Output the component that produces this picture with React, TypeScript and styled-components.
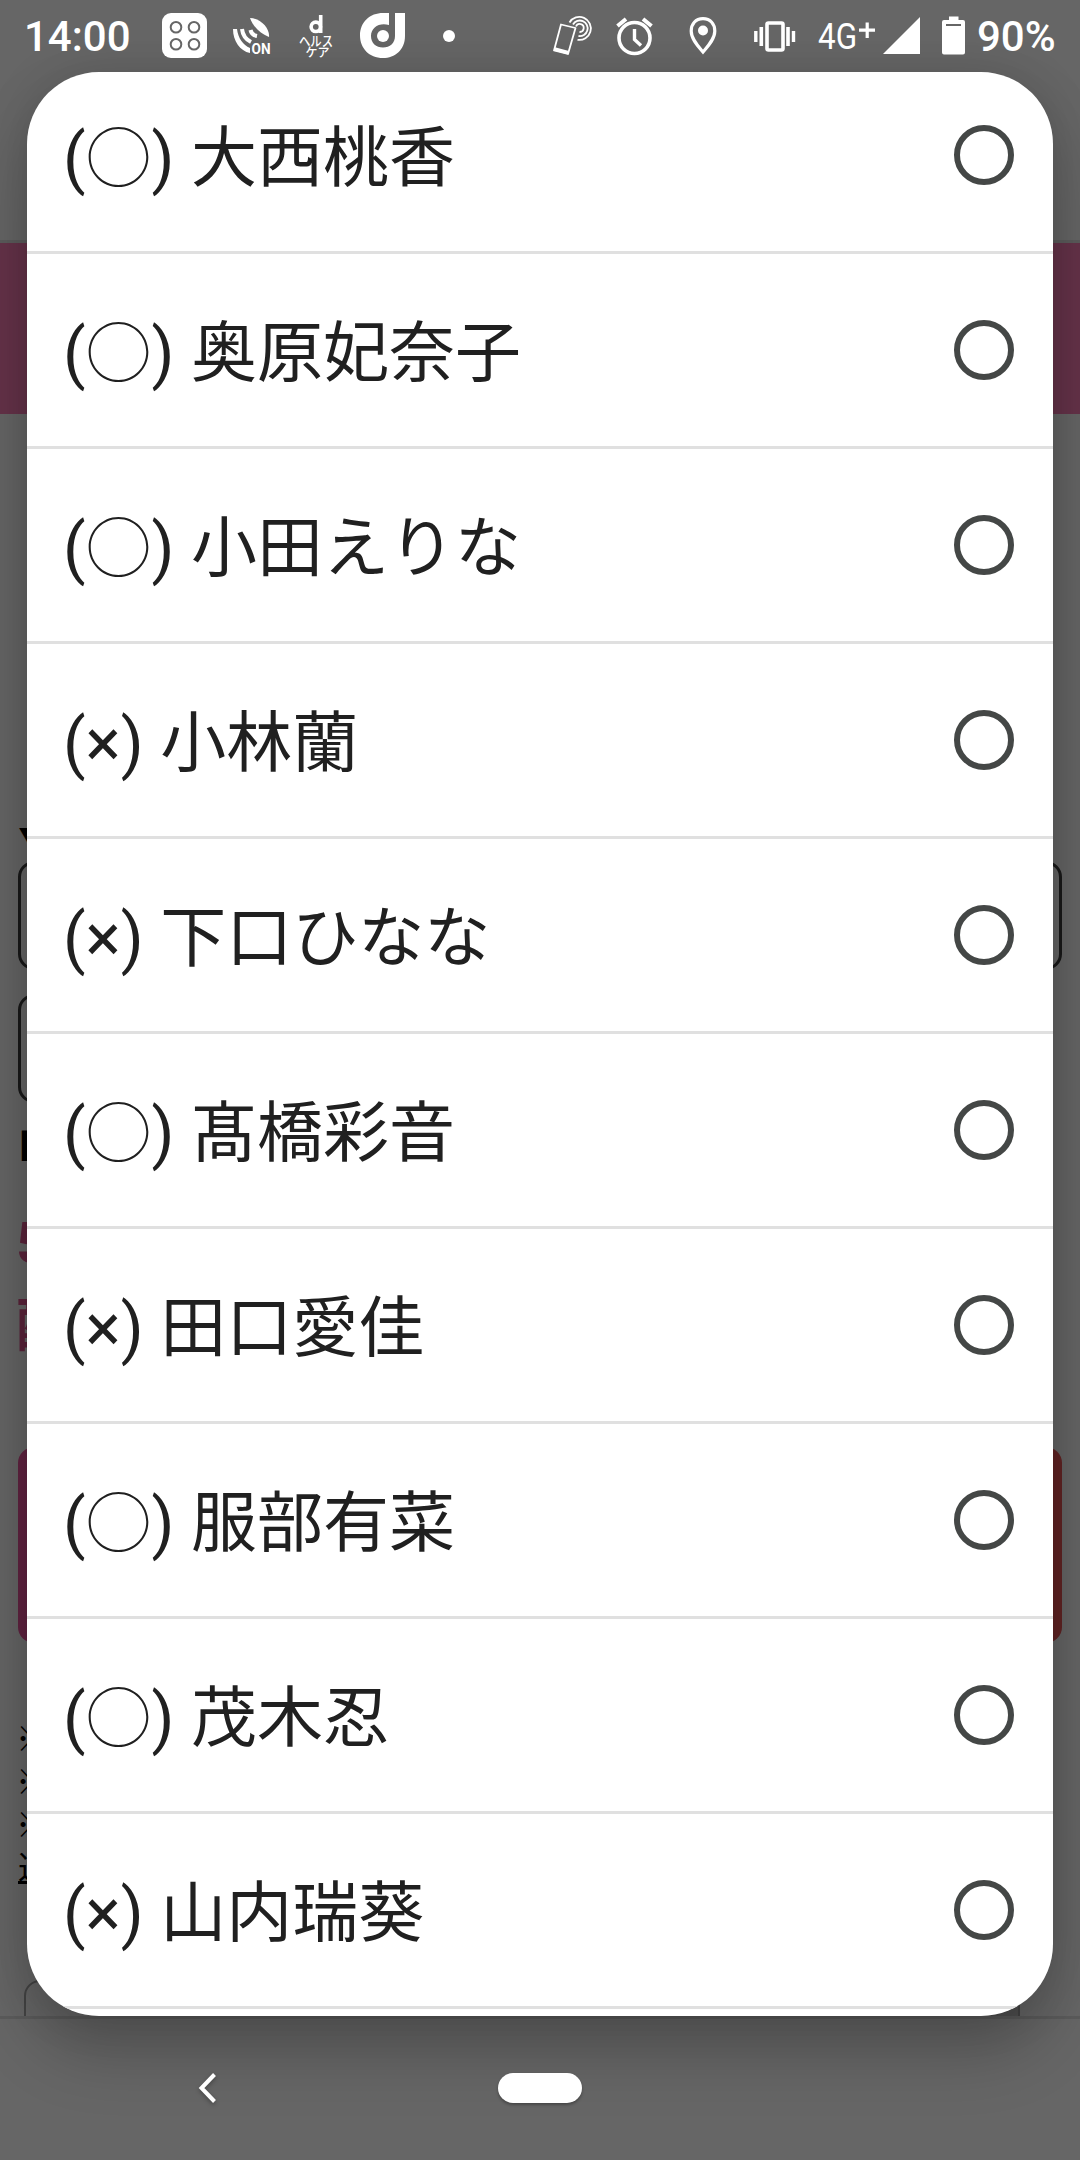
import React from "react";
import styled, { createGlobalStyle } from "styled-components";

const GlobalStyle = createGlobalStyle`
  body { margin: 0; background: #666666; }
  * { box-sizing: border-box; }
`;

const sans = `Roboto, "Noto Sans CJK JP", sans-serif`;

const Screen = styled.div`
  position: relative;
  width: 1080px;
  height: 2160px;
  overflow: hidden;
  display: flex;
  flex-direction: column;
  background: #666666;
  font-family: ${sans};
`;

const Page = styled.main`
  height: 2016px;
  flex: none;
  overflow: hidden;
  display: flex;
  flex-direction: column;
  padding-top: 240px;
  color: #000;
`;

const Band = styled.div`
  height: 174px;
  flex: none;
  background: #66334a;
  border-top: 3px solid #5c5c5c;
`;

const Content = styled.section`
  display: flex;
  flex-direction: column;
  padding: 400px 18px 0;
`;

const Caption = styled.div<{ $h: number; $line: number }>`
  height: ${(p) => p.$h}px;
  line-height: ${(p) => p.$line}px;
  font-size: 38px;
`;

const Field = styled.div<{ $w: number }>`
  width: ${(p) => p.$w}px;
  height: 109px;
  margin-bottom: 24px;
  border: 3px solid #1a1a1a;
  border-radius: 16px;
`;

const Prices = styled.div`
  margin-left: -2px;
  padding-top: 35px;
  font-size: 58px;
  font-weight: 700;
  line-height: 83px;
  color: #5c243b;
`;

const Submit = styled.div`
  height: 196px;
  margin-top: 79px;
  border-radius: 16px;
  background: linear-gradient(90deg, #612341, #612323);
`;

const Notes = styled.div`
  margin-top: 75px;
  margin-left: -2px;
  font-size: 33px;
  font-weight: 700;
  line-height: 43px;
`;

const Underlined = styled.div`
  margin-left: 2px;
  font-size: 32px;
  font-weight: 400;
  text-decoration: underline;
  text-decoration-thickness: 3px;
`;

const Select = styled.div`
  display: flex;
  justify-content: flex-end;
  width: 996px;
  height: 80px;
  margin: 90px 0 0 6px;
  border: 2px solid #444;
  border-radius: 16px 0 0 0;
`;

const SelectArrow = styled.div`
  width: 80px;
  background: #515151;
`;

const NavBar = styled.nav`
  flex: 1;
  display: flex;
  align-items: flex-start;
  border-top: 3px solid #5b5b5b;
`;

const Dialog = styled.div`
  position: absolute;
  left: 27px;
  top: 72px;
  width: 1026px;
  height: 1944px;
  overflow: hidden;
  border-radius: 72px;
  background: #fff;
`;

const DialogShadow = styled.div`
  position: absolute;
  left: 27px;
  top: 72px;
  width: 1026px;
  height: 1944px;
  border-radius: 72px;
  box-shadow: 0 36px 64px rgba(0, 0, 0, 0.22), 0 0 48px rgba(0, 0, 0, 0.12);
`;

const Options = styled.ul`
  list-style: none;
  margin: -13px 0 0;
  padding: 0;
`;

const Option = styled.li`
  display: flex;
  align-items: center;
  justify-content: space-between;
  height: 195px;
  padding: 0 39px 0 36px;
  border-bottom: 3px solid #e0e0e0;
  color: #202020;
`;

const Name = styled.span`
  padding-top: 7px;
  font-size: 66px;
  line-height: 78px;
  white-space: pre;
`;

const Ring = styled.span`
  display: inline-block;
  width: 66px;
  line-height: 1;
  text-align: center;
  font-size: 64px;
`;

const Radio = styled.span`
  width: 60px;
  height: 60px;
  border: 6px solid #444746;
  border-radius: 50%;
`;

const StatusBar = styled.header`
  position: absolute;
  inset: 0 0 auto 0;
  height: 72px;
  display: flex;
  align-items: center;
  color: #fff;
`;

const Clock = styled.span`
  margin-left: 24px;
  width: 138px;
  font-size: 42px;
  font-weight: 500;
  line-height: 72px;
  padding-top: 2px;
`;

const StatusIcons = styled.svg`
  display: block;
  flex: none;
`;

const Percent = styled.span`
  margin-left: 12px;
  font-size: 42px;
  font-weight: 500;
  line-height: 72px;
  padding-top: 2px;
`;

const NavKeys = styled.div`
  position: absolute;
  inset: 2019px 0 0 0;
  display: flex;
  align-items: flex-start;
  padding: 54px 0 0 198px;
`;

const Back = styled.svg`
  display: block;
  filter: drop-shadow(0 2px 2px rgba(0, 0, 0, 0.3));
`;

const Home = styled.div`
  width: 84px;
  height: 30px;
  margin-left: 280px;
  border-radius: 15px;
  background: #fff;
  box-shadow: 0 2px 3px rgba(0, 0, 0, 0.3);
`;

const options = [
  { open: true, name: "大西桃香" },
  { open: true, name: "奥原妃奈子" },
  { open: true, name: "小田えりな" },
  { open: false, name: "小林蘭" },
  { open: false, name: "下口ひなな" },
  { open: true, name: "髙橋彩音" },
  { open: false, name: "田口愛佳" },
  { open: true, name: "服部有菜" },
  { open: true, name: "茂木忍" },
  { open: false, name: "山内瑞葵" },
];

function AppIcons() {
  return (
    <StatusIcons width="376" height="72" viewBox="162 0 376 72" fill="#fff">
      <rect x="162" y="13" width="45" height="45" rx="9" />
      <g fill="none" stroke="#666" strokeWidth="2">
        <circle cx="176" cy="27.300" r="5.300" />
        <circle cx="194" cy="27.300" r="5.300" />
        <circle cx="176" cy="44.300" r="5.300" />
        <circle cx="194" cy="44.300" r="5.300" />
      </g>
      <path d="M250 18C260 18 270 28 269 37C261 34 253 27 250 18Z" />
      <path d="M233 29C233 41 240 51 250 53V48C243 45 238 38 237 29Z" />
      <g fill="none" stroke="#fff">
        <path d="M242 29Q243 38 251 42" strokeWidth="4" />
        <path d="M250.500 30Q251.500 35 257 36" strokeWidth="4" />
      </g>
      <text x="251.500" y="53.500" fontFamily="Roboto" fontSize="15.500" fontWeight="700" textLength="19" lengthAdjust="spacingAndGlyphs">ON</text>
      <g fill="none" stroke="#fff" strokeWidth="3.600">
        <circle cx="315.800" cy="26.800" r="4.700" />
        <path d="M320.700 15V33" />
      </g>
      <text x="299" y="46" fontFamily="Noto Sans CJK JP" fontSize="13.500" fontWeight="500" textLength="34" lengthAdjust="spacingAndGlyphs">ヘルス</text>
      <text x="305.500" y="56.500" fontFamily="Noto Sans CJK JP" fontSize="12.500" fontWeight="500" textLength="24" lengthAdjust="spacingAndGlyphs">ケア</text>
      <path fillRule="evenodd" d="M389 13V25C380 22 371 27 371 36C371 43 376 47.500 383 47.500C390 47.500 395 43 395 36V13H405V36C405 50 395 58 383 58C369 58 360 48 360 35.500C360 22 370 13 383 13Z" />
      <circle cx="383" cy="36" r="6" />
      <circle cx="449" cy="36" r="6" />
    </StatusIcons>
  );
}

function SystemIcons() {
  return (
    <StatusIcons width="279" height="72" viewBox="538 0 279 72" fill="none" stroke="#fff">
      <g strokeWidth="1.800">
        <path d="M561 24.500L575.500 28L568 54L554 50.500Z" strokeLinejoin="round" />
        <path d="M554.500 49L568.500 52.800" strokeWidth="3.600" />
        <path d="M569.500 22.500A11.500 11.500 0 1 1 577.500 39.800" />
        <path d="M573 24.500A7.800 7.800 0 1 1 578.500 36" />
        <path d="M576 26.500A4 4 0 1 1 579.500 32" />
      </g>
      <circle cx="634.500" cy="38" r="15.500" strokeWidth="3.600" />
      <path d="M634.500 29V39.500L641 45.500" strokeWidth="3.400" />
      <path d="M617.500 26L626 19M643 19L651.500 26" strokeWidth="4" />
      <path d="M703 18.700C695.500 18.700 691.200 24 691.200 31C691.200 39 698 46 703 52C708 46 714.800 39 714.800 31C714.800 24 710.500 18.700 703 18.700Z" strokeWidth="3.200" />
      <circle cx="703" cy="30.500" r="5" fill="#fff" stroke="none" />
      <rect x="767" y="23" width="16" height="27" rx="1.500" strokeWidth="3.600" />
      <path d="M761.300 27V46M788 27V46" strokeWidth="3.600" />
      <path d="M755.800 31V42M793.500 31V42" strokeWidth="3.400" />
    </StatusIcons>
  );
}

function NetworkIcon() {
  return (
    <StatusIcons width="64" height="72" viewBox="817 0 64 72" fill="#fff">
      <text x="818" y="49" fontFamily="Roboto" fontSize="37.500" textLength="39" lengthAdjust="spacingAndGlyphs">4G</text>
      <path d="M867.200 22.500V38M859 30.200H875" stroke="#fff" strokeWidth="3.200" />
    </StatusIcons>
  );
}

function PowerIcons() {
  return (
    <StatusIcons width="84" height="72" viewBox="881 0 84 72" fill="#fff">
      <path d="M883 54L920 17V54Z" />
      <path fillRule="evenodd" d="M949 16.500H958.500V20H963Q965 20 965 22V52.500Q965 54.500 963 54.500H944Q942 54.500 942 52.500V22Q942 20 944 20H949ZM946 24V26H961V24Z" />
    </StatusIcons>
  );
}

export default function App() {
  return (
    <Screen>
      <GlobalStyle />
      <Page>
        <Band />
        <Content>
          <Caption $h={47} $line={58}>▼</Caption>
          <Field $w={1044} />
          <Field $w={900} />
          <Caption $h={40} $line={40}>■</Caption>
          <Prices>
            <div>5</div>
            <div>配</div>
          </Prices>
          <Submit />
          <Notes>
            <div>※</div>
            <div>※</div>
            <div>※</div>
            <Underlined>返</Underlined>
          </Notes>
          <Select>
            <SelectArrow />
          </Select>
        </Content>
      </Page>
      <NavBar />
      <DialogShadow />
      <Dialog role="dialog">
        <Options>
          {options.map(({ open, name }) => (
            <Option key={name}>
              <Name>
                ({open ? <Ring>◯</Ring> : "×"}) {name}
              </Name>
              <Radio />
            </Option>
          ))}
        </Options>
      </Dialog>
      <StatusBar>
        <Clock>14:00</Clock>
        <AppIcons />
        <SystemIcons />
        <NetworkIcon />
        <PowerIcons />
        <Percent>90%</Percent>
      </StatusBar>
      <NavKeys>
        <Back width="20" height="32" viewBox="0 0 20 32" fill="none" stroke="#fff" strokeWidth="4">
          <path d="M16.500 1.500L3.500 15L16.500 28.500" />
        </Back>
        <Home />
      </NavKeys>
    </Screen>
  );
}
